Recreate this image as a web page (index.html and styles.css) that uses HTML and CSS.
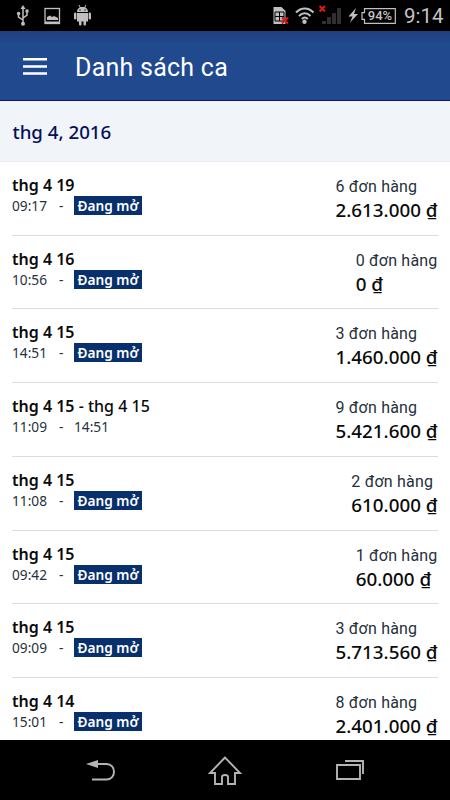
FILE: index.html
```html
<!DOCTYPE html>
<html lang="vi">
<head>
<meta charset="utf-8">
<title>Danh sách ca</title>
<link rel="stylesheet" href="styles.css">
</head>
<body>
<div class="statusbar">
  <svg class="status-icons" width="150" height="31" viewBox="0 0 150 31">
    <g fill="none" stroke="#c0c0c0" stroke-width="1.5"><path d="M23 8v15M23 20l-4.500-3v-3M23 18l4-3v-4"/></g>
    <g fill="#c0c0c0"><path d="M23 5l2.500 4h-5z"/><circle cx="23" cy="23.700" r="2"/><circle cx="18.600" cy="13.500" r="1.700"/><path d="M25.500 9.500h3v3h-3z"/></g>
    <rect x="45" y="8.500" width="14.500" height="15" fill="none" stroke="#c0c0c0" stroke-width="1.300"/>
    <path d="M47 20v-3l3-1.500 2 1.500 2-1 4 2v2zM45 21.500h15v2H45z" fill="#c0c0c0"/>
    <g fill="#c0c0c0"><path d="M77 12c0-3 2-5 5.500-5s5.500 2 5.500 5zM77 13h11v8.500H77z"/><rect x="74" y="12.500" width="2.400" height="7" rx="1.200"/><rect x="88.600" y="12.500" width="2.400" height="7" rx="1.200"/><rect x="79" y="20" width="2.500" height="5.500" rx="1"/><rect x="83.500" y="20" width="2.500" height="5.500" rx="1"/></g>
    <path d="M79 5l1.500 3M86 5l-1.500 3" stroke="#c0c0c0"/><circle cx="80" cy="10" r=".7"/><circle cx="85" cy="10" r=".7"/>
  </svg>
  <div class="status-right">
    <svg width="91" height="31" viewBox="270 0 91 31">
      <path d="M273.500 7h8l4 4v13h-12z" fill="#c0c0c0"/><path d="M275 12h9v9h-9zM279.500 12v9M275 16.500h9" fill="none" stroke="#000"/>
      <path d="M282 17.500l6 6M288 17.500l-6 6" stroke="#e01818" stroke-width="2"/>
      <g fill="none" stroke="#c0c0c0" stroke-width="2"><path d="M296 12.500c5-5.500 12.500-5.500 17.500 0M299 16c3.500-3.700 8-3.700 11.500 0M301.800 19c2-2 4-2 6 0"/></g><circle cx="304.500" cy="21.700" r="2.200" fill="#c0c0c0"/>
      <path d="M319.500 6l5.500 5.500M325 6l-5.500 5.500" stroke="#e01818" stroke-width="2"/>
      <path d="M322 21h4v3h-4zM327 17h4v7h-4zM332 13h4v11h-4zM337 8h4v16h-4z" fill="#303030"/>
      <path d="M356 8l-7.500 8.500h4L350 22.500l8-8.500h-4z" fill="#c0c0c0"/>
    </svg>
    <span class="battery"><svg width="35" height="16" viewBox="0 0 35 16"><path d="M3.500.7h30.800v14.600H3.500v-4H1V4.700h2.500z" fill="none" stroke="#c0c0c0" stroke-width="1.200"/></svg><span>94%</span></span>
    <span class="clock">9:14</span>
  </div>
</div>
<header class="toolbar">
  <svg width="24" height="18" viewBox="0 0 24 18"><path d="M0 2.200h24M0 9.500h24M0 16.500h24" stroke="#fff" stroke-width="2.400"/></svg>
  <h1>Danh sách ca</h1>
</header>
<h2 class="month">thg 4, 2016</h2>
<main class="list">
  <article class="row"><div class="shift"><h3>thg 4 19</h3><p><time>09:17</time><i>-</i><b>Đang mở</b></p></div><div class="total"><span>6 đơn hàng</span><strong>2.613.000 ₫</strong></div></article>
  <article class="row"><div class="shift"><h3>thg 4 16</h3><p><time>10:56</time><i>-</i><b>Đang mở</b></p></div><div class="total"><span>0 đơn hàng</span><strong>0 ₫</strong></div></article>
  <article class="row"><div class="shift"><h3>thg 4 15</h3><p><time>14:51</time><i>-</i><b>Đang mở</b></p></div><div class="total"><span>3 đơn hàng</span><strong>1.460.000 ₫</strong></div></article>
  <article class="row"><div class="shift"><h3>thg 4 15 <em>- thg 4 15</em></h3><p><time>11:09</time><i>-</i><time>14:51</time></p></div><div class="total"><span>9 đơn hàng</span><strong>5.421.600 ₫</strong></div></article>
  <article class="row"><div class="shift"><h3>thg 4 15</h3><p><time>11:08</time><i>-</i><b>Đang mở</b></p></div><div class="total"><span>2 đơn hàng</span><strong>610.000 ₫</strong></div></article>
  <article class="row"><div class="shift"><h3>thg 4 15</h3><p><time>09:42</time><i>-</i><b>Đang mở</b></p></div><div class="total"><span>1 đơn hàng</span><strong>60.000 ₫</strong></div></article>
  <article class="row"><div class="shift"><h3>thg 4 15</h3><p><time>09:09</time><i>-</i><b>Đang mở</b></p></div><div class="total"><span>3 đơn hàng</span><strong>5.713.560 ₫</strong></div></article>
  <article class="row"><div class="shift"><h3>thg 4 14</h3><p><time>15:01</time><i>-</i><b>Đang mở</b></p></div><div class="total"><span>8 đơn hàng</span><strong>2.401.000 ₫</strong></div></article>
</main>
<nav class="navbar">
  <svg width="450" height="60" viewBox="0 740 450 60" fill="none" stroke="#b4b4b4" stroke-width="1.900">
    <path d="M92 779.500h14.500c10 0 10-15.500 0-15.500H96"/><path d="M86 764l12-4v8z" fill="#b4b4b4" stroke="none"/>
    <path d="M225 757.500l-15 15.500h5v11h7v-7q0-2 3-2t3 2v7h7v-11h5z"/>
    <path d="M337 765h23v14h-23zM345 761h18v13"/>
  </svg>
</nav>
</body>
</html>
```

FILE: styles.css
```css
* { box-sizing: border-box; }
body, h1, h2, h3, p { margin: 0; }
body {
  width: 450px; height: 800px; overflow: hidden;
  display: flex; flex-direction: column;
  background: #fff; color: #0a0a0a;
  font-family: "Noto Sans", "Open Sans", sans-serif;
}
svg { display: block; flex: none; }
.statusbar { flex: 0 0 31px; background: #000; display: flex; justify-content: space-between; }
.status-right { display: flex; align-items: center; padding-right: 7px; color: #c4c4c4; font-family: Roboto, sans-serif; }
.battery { display: grid; width: 35px; height: 16px; margin-right: 8px; font-size: 13px; font-weight: 500; line-height: 16px; text-align: center; }
.battery > * { grid-area: 1 / 1; }
.battery span { padding-left: 3px; }
.clock { font-size: 20.500px; line-height: 30px; width: 39px; white-space: nowrap; }
.toolbar {
  flex: 0 0 70px; display: flex; align-items: center; gap: 28px; padding: 1px 23px 0;
  background: linear-gradient(#203f7d, #20498e 12px); border-bottom: 1px solid #06168a; color: #fff;
}
.toolbar h1 { font: 400 25px/36px Roboto, sans-serif; letter-spacing: .25px; padding-top: 3px; }
.month { flex: 0 0 61px; padding: 1px 0 0 12.500px; background: #f1f4f8; border-bottom: 1px solid #e8ebef; color: #04105c; font-size: 18.700px; font-weight: 500; line-height: 59px; }
.list { flex: 1; min-height: 0; overflow: hidden; padding: 0 12.500px 0 12px; }
.row { height: 73.800px; padding-top: 13px; display: flex; justify-content: space-between; border-bottom: 1px solid #dcdcdc; }
.row:first-child { height: 73.500px; }
.shift h3 { font-size: 16px; line-height: 21px; font-weight: 600; }
.shift em { font-style: normal; font-weight: 500; }
.shift p { display: flex; align-items: center; height: 19px; font-size: 13.700px; line-height: 19px; color: #26303a; }
.shift i { width: 26px; padding-left: 11px; font-style: normal; }
.shift time { width: 36px; white-space: nowrap; }
.shift b { width: 68px; height: 19px; background: #08306c; color: #fff; font-size: 13.700px; font-weight: 600; text-align: center; line-height: 19px; white-space: nowrap; }
.total { display: flex; flex-direction: column; white-space: nowrap; }
.total span { font: 400 16px/23px Roboto, sans-serif; letter-spacing: .2px; color: #26303a; }
.total strong { font-size: 18.800px; font-weight: 500; line-height: 24px; }
.navbar { flex: 0 0 60px; background: #000; }
```
